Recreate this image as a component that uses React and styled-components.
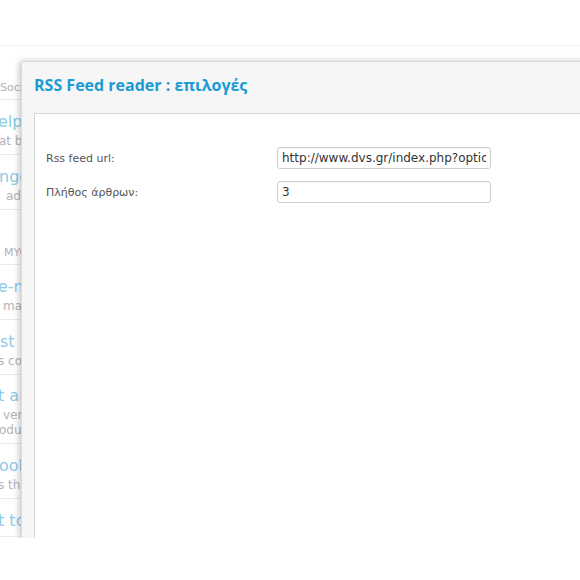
import React from 'react';
import styled, { createGlobalStyle } from 'styled-components';

const GlobalStyle = createGlobalStyle`
  html, body {
    margin: 0;
    padding: 0;
    background: #fff;
    font-family: "DejaVu Sans", Verdana, sans-serif;
  }
`;

// barra superior vacia
const TopBar = styled.div`
  height: 45px;
  border-bottom: 1px solid #f0f0f0;
`;

const Stage = styled.div`
  position: relative;
  height: 492px;
  overflow: hidden;
`;

// lista lateral que queda detras del dialogo
const Sidebar = styled.div`
  width: 200px;
  display: flex;
  flex-direction: column;
`;

const SectionHead = styled.div`
  padding: ${(p) => p.$top}px 0 4px;
  border-bottom: 1px solid #ececec;
  font-size: 11px;
  line-height: 14px;
  color: #b3b3b3;
  white-space: nowrap;
`;

const Item = styled.div`
  padding: ${(p) => (p.$tall ? 11 : 12)}px 0 5px;
  border-bottom: 1px solid #ececec;
  white-space: nowrap;
`;

const ItemTitle = styled.div`
  font-size: 16px;
  line-height: 20px;
  color: #8dcbe8;
  text-decoration: ${(p) => (p.$underline ? 'underline' : 'none')};
`;

const ItemDesc = styled.div`
  margin-top: 2px;
  font-size: 12px;
  line-height: 15px;
  color: #b3b3b3;
  & + & {
    margin-top: 0;
  }
`;

const Frag = styled.span`
  display: inline-block;
  margin-left: ${(p) => p.$shift || 0}px;
`;

// dialogo modal
const Dialog = styled.div`
  position: absolute;
  top: 15px;
  left: 21px;
  right: -12px;
  bottom: 0;
  background: #f6f6f6;
  border: 1px solid #dadada;
  border-bottom: none;
  border-radius: 4px 0 0 0;
  box-shadow: -2px 0 6px rgba(0, 0, 0, 0.22);
  display: flex;
  flex-direction: column;
`;

const DialogTitle = styled.h2`
  margin: 0;
  padding: 12px 0 0 12px;
  height: 39px;
  box-sizing: border-box;
  font-family: "Open Sans", "DejaVu Sans", sans-serif;
  font-weight: 700;
  font-size: 16px;
  line-height: 22px;
  color: #1b9bd4;
`;

const Panel = styled.div`
  flex: 1;
  margin: 12px 0 0 12px;
  background: #fff;
  border: 1px solid #d6d6d6;
  border-bottom: none;
  padding: 33px 0 0 11px;
`;

const Form = styled.div`
  display: grid;
  grid-template-columns: 231px 214px;
  row-gap: 12px;
  align-items: center;
`;

const Label = styled.label`
  font-size: 11px;
  color: #555;
`;

const Input = styled.input`
  box-sizing: border-box;
  width: 214px;
  height: 22px;
  padding: 0 4px;
  border: 1px solid #cfcfcf;
  border-radius: 3px;
  box-shadow: inset 0 1px 1px rgba(0, 0, 0, 0.05);
  font-family: "DejaVu Sans", Verdana, sans-serif;
  font-size: 12px;
  color: #333;
  background: #fff;
  outline: none;
`;

const items = [
  { title: 'elp & Support', tShift: -2, desc: ['at blog posts'], dShift: [-1] },
  { title: 'nge log', tShift: -1, desc: ['add ons'], dShift: [6] },
];

const items2 = [
  { title: 'e-mail list', tShift: -2, underline: true, desc: ['manage lists'], dShift: [3] },
  { title: 'st', tShift: 0, desc: ['s content'], dShift: [-2] },
  { title: 't and more', tShift: -2, underline: true, tall: true, desc: ['versions of', 'oducts'], dShift: [3, -1] },
  { title: 'ook', tShift: -1, desc: ['s the page'], dShift: [-2] },
  { title: 't to us', tShift: -2, desc: [], dShift: [] },
];

function SideItem({ item }) {
  return (
    <Item $tall={item.tall}>
      <ItemTitle $underline={item.underline}>
        <Frag $shift={item.tShift}>{item.title}</Frag>
      </ItemTitle>
      {item.desc.map((d, i) => (
        <ItemDesc key={i}>
          <Frag $shift={item.dShift[i]}>{d}</Frag>
        </ItemDesc>
      ))}
    </Item>
  );
}

export default function App() {
  return (
    <>
      <GlobalStyle />
      <TopBar />
      <Stage>
        <Sidebar>
          <SectionHead $top={35}>
            <Frag $shift={0}>Social</Frag>
          </SectionHead>
          {items.map((it, i) => (
            <SideItem key={i} item={it} />
          ))}
          <SectionHead $top={36}>
            <Frag $shift={4}>MYO</Frag>
          </SectionHead>
          {items2.map((it, i) => (
            <SideItem key={i} item={it} />
          ))}
        </Sidebar>

        <Dialog>
          <DialogTitle>RSS Feed reader : επιλογές</DialogTitle>
          <Panel>
            <Form>
              <Label>Rss feed url:</Label>
              <Input defaultValue="http://www.dvs.gr/index.php?option=com_content&view=category&format=feed" />
              <Label>Πλήθος άρθρων:</Label>
              <Input defaultValue="3" />
            </Form>
          </Panel>
        </Dialog>
      </Stage>
    </>
  );
}
